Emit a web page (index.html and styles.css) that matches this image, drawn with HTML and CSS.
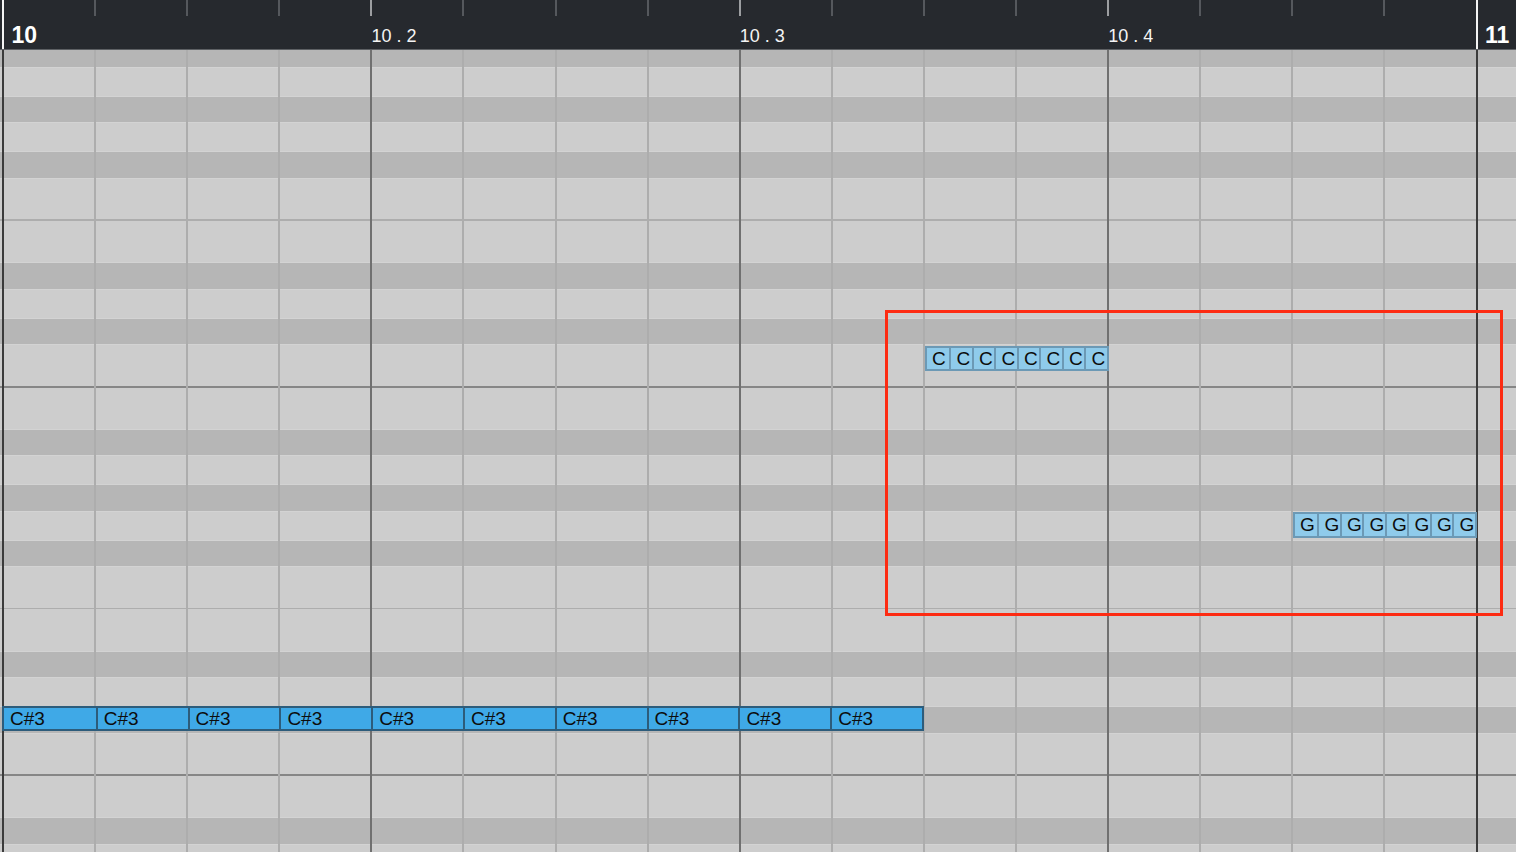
FILE: index.html
```html
<!DOCTYPE html>
<html>
    <head>
        <meta charset="utf-8" />
        <meta name="viewport" content="width=device-width" />
        <title>key editor</title>
        <link rel="stylesheet" href="styles.css">
    </head>
    <body>
        <!-- ruler -->
        <div class="ruler">
            <div class="tick bar"><span class="bar-label">10</span></div>
            <div class="tick"></div>
            <div class="tick"></div>
            <div class="tick"></div>
            <div class="tick beat"><span class="beat-label">10 . 2</span></div>
            <div class="tick"></div>
            <div class="tick"></div>
            <div class="tick"></div>
            <div class="tick beat"><span class="beat-label">10 . 3</span></div>
            <div class="tick"></div>
            <div class="tick"></div>
            <div class="tick"></div>
            <div class="tick beat"><span class="beat-label">10 . 4</span></div>
            <div class="tick"></div>
            <div class="tick"></div>
            <div class="tick"></div>
            <div class="tick bar last"><span class="bar-label">11</span></div>
        </div>

        <!-- note grid -->
        <div class="grid">
            <div class="lanes">
                <div class="lane dark"></div>
                <div class="lane"></div>
                <div class="lane dark"></div>
                <div class="lane"></div>
                <div class="lane dark"></div>
                <div class="lane"></div>
                <div class="lane line soft"></div>
                <div class="lane"></div>
                <div class="lane dark"></div>
                <div class="lane"></div>
                <div class="lane dark"></div>
                <div class="lane"></div>
                <div class="lane line"></div>
                <div class="lane"></div>
                <div class="lane dark"></div>
                <div class="lane"></div>
                <div class="lane dark"></div>
                <div class="lane"></div>
                <div class="lane dark"></div>
                <div class="lane"></div>
                <div class="lane line soft"></div>
                <div class="lane"></div>
                <div class="lane dark"></div>
                <div class="lane"></div>
                <div class="lane dark"></div>
                <div class="lane"></div>
                <div class="lane line"></div>
                <div class="lane"></div>
                <div class="lane dark"></div>
                <div class="lane"></div>
            </div>

            <div class="cols">
                <div class="col bar"></div>
                <div class="col"></div>
                <div class="col"></div>
                <div class="col"></div>
                <div class="col beat"></div>
                <div class="col"></div>
                <div class="col"></div>
                <div class="col"></div>
                <div class="col beat"></div>
                <div class="col"></div>
                <div class="col"></div>
                <div class="col"></div>
                <div class="col beat"></div>
                <div class="col"></div>
                <div class="col"></div>
                <div class="col"></div>
                <div class="col bar last"></div>
            </div>

            <!-- notes, placed by time and pitch -->
            <div class="notes notes-c">
                <div class="note small">C</div>
                <div class="note small">C</div>
                <div class="note small">C</div>
                <div class="note small">C</div>
                <div class="note small">C</div>
                <div class="note small">C</div>
                <div class="note small">C</div>
                <div class="note small">C</div>
            </div>

            <div class="notes notes-g">
                <div class="note small">G</div>
                <div class="note small">G</div>
                <div class="note small">G</div>
                <div class="note small">G</div>
                <div class="note small">G</div>
                <div class="note small">G</div>
                <div class="note small">G</div>
                <div class="note small">G</div>
            </div>

            <div class="notes notes-cs3">
                <div class="note wide">C#3</div>
                <div class="note wide">C#3</div>
                <div class="note wide">C#3</div>
                <div class="note wide">C#3</div>
                <div class="note wide">C#3</div>
                <div class="note wide">C#3</div>
                <div class="note wide">C#3</div>
                <div class="note wide">C#3</div>
                <div class="note wide">C#3</div>
                <div class="note wide">C#3</div>
            </div>

            <!-- selection marker -->
            <div class="highlight"></div>
        </div>
    </body>
</html>
```

FILE: styles.css
```css
html, body { margin: 0; padding: 0; width: 100%; height: 100%; overflow: hidden }
body {
    background: #cdcdcd;
    font-family: "Liberation Sans", Arial, sans-serif;
}

/* ruler on top */
.ruler {
    display: flex;
    height: 49px;
    padding-left: 2px;
    background: #26292e;
    border-bottom: 1px solid #5d6064;
}
.tick {
    position: relative;
    flex: none;
    width: 92.1px;
    display: flex;
    align-items: flex-end;
}
.tick:before {
    content: "";
    position: absolute;
    left: 0;
    top: 0;
    width: 2px;
    height: 16px;
    background: #55585d;
}
.tick.beat:before {
    background: #9c9ea1;
}
.tick.bar:before {
    height: 49px;
    background: #f4f4f4;
}
.tick.last {
    flex: 1;
}
.beat-label {
    padding: 0 0 4px 1px;
    font-size: 18px;
    line-height: 18px;
    color: #f4f4f4;
}
.bar-label {
    padding: 0 0 3px 9.5px;
    font-size: 23px;
    line-height: 22px;
    font-weight: bold;
    color: #ffffff;
}

/* grid */
.grid {
    position: relative;
    height: 802px;
    overflow: hidden;
}
.lanes {
    margin-top: -9.9px;
}
.lane {
    height: 27.75px;
    background: #cdcdcd;
}
.lane.dark {
    background: linear-gradient(to bottom,
        #d3d3d3 0, #d3d3d3 1.4px,
        #b6b6b6 1.4px, #b6b6b6 calc(100% - 1.4px),
        #d3d3d3 calc(100% - 1.4px));
}
.lane.line {
    position: relative;
}
.lane.line:after {
    content: "";
    position: absolute;
    left: 0;
    right: 0;
    top: 50%;
    height: 2px;
    margin-top: -1px;
    background: #868686;
}
.lane.line.soft:after {
    height: 1.5px;
    background: #adadad;
}

.cols {
    position: absolute;
    top: 0;
    left: 0;
    right: 0;
    bottom: 0;
    display: flex;
    padding-left: 2px;
}
.col {
    flex: none;
    width: 92.1px;
    box-sizing: border-box;
    border-left: 2px solid #adadad;
}
.col.beat {
    border-left-color: #707070;
}
.col.bar {
    border-left-color: #3b3b3b;
}
.col.last {
    flex: 1;
}

/* notes */
.notes {
    position: absolute;
    display: flex;
    border: 2px solid #6c99b5;
    background: #8fcbeb;
}
.note {
    flex: none;
    box-sizing: border-box;
    overflow: hidden;
    white-space: nowrap;
    color: #0d0d0d;
    font-size: 19px;
    border-left: 2px solid #6c99b5;
}
.note:first-child {
    border-left: none;
}
.note.small {
    width: 22.5px;
    height: 21.5px;
    line-height: 22px;
    padding-left: 5.5px;
}
.notes-c {
    left: 924.5px;
    top: 295.5px;
}
.notes-g {
    left: 1292.5px;
    top: 462px;
}
.notes-cs3 {
    left: 2px;
    top: 656.3px;
    background: #3fa9e7;
    border-color: #2d5c7b;
}
.notes-cs3 .note {
    border-left-color: #2d5c7b;
}
.note.wide {
    width: 91.8px;
    height: 21px;
    line-height: 21px;
    padding-left: 6px;
}

/* red selection box */
.highlight {
    position: absolute;
    left: 884.5px;
    top: 260px;
    width: 618.5px;
    height: 306px;
    box-sizing: border-box;
    border: 3.5px solid #fd2b12;
}
```
